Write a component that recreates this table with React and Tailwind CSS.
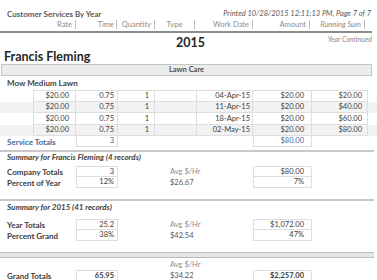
import React from 'react';

const cols = 'grid grid-cols-[33px_43px_42px_37px_42px_56px_59px_56px]';
const cellBorder = 'border-r border-b border-[#dedede]';

const rows = [
    { date: '04-Apr-15', sum: '$20.00' },
    { date: '11-Apr-15', sum: '$40.00' },
    { date: '18-Apr-15', sum: '$60.00' },
    { date: '02-May-15', sum: '$80.00' },
];

function HeaderRow() {
    const sep = 'border-r border-[#bfbfbf] h-[9px] flex items-center leading-none';
    return (
        <div className="grid grid-cols-[33px_43px_41px_38px_40px_58px_57px_55px] h-[9px] text-[7.5px] text-[#8c8c8c]">
            <div />
            <div className={`${sep} justify-end pr-[3px]`}>Rate</div>
            <div className={`${sep} justify-end pr-[2px]`}>Time</div>
            <div className={`${sep} justify-end pr-[3px]`}>Quantity</div>
            <div className={`${sep} justify-center`}>Type</div>
            <div className={`${sep} justify-end pr-[3px]`}>Work Date</div>
            <div className={`${sep} justify-end pr-[3px]`}>Amount</div>
            <div className={`${sep} justify-end pr-[3px] italic`}>Running Sum</div>
        </div>
    );
}

function SummaryRows({ rows }) {
    return rows.map((r, i) => (
        <div key={r.label} className={`${cols} h-[11px] text-[7.5px] leading-none`}>
            <div className="col-span-2 flex items-center pl-[7px] text-[8px] font-bold text-[#404040]">{r.label}</div>
            <div
                className={`flex items-center justify-end pr-[3px] border-x border-b border-[#dedede] text-[#404040] ${i === 0 ? 'border-t' : ''}`}
            >
                {r.time}
            </div>
            <div />
            <div className={`col-span-2 flex items-center pl-[15px] ${r.avgLabel ? 'text-[#8c8c8c]' : 'text-[#595959]'}`}>
                {r.avg}
            </div>
            <div
                className={`flex items-center justify-end pr-[7px] border-x border-b border-[#dedede] text-[#404040] ${i === 0 ? 'border-t' : ''}`}
            >
                {r.amount}
            </div>
            <div />
        </div>
    ));
}

export default function App() {
    return (
        <div
            className="w-[377px] h-[280px] overflow-hidden bg-white text-[#404040]"
            style={{ fontFamily: 'Lato, "Open Sans", sans-serif' }}
        >
            {/* page header */}
            <div className="pt-[9px] h-[19px] flex items-center justify-between">
                <div className="pl-[7px] text-[8px] font-bold text-[#595959] leading-none">Customer Services By Year</div>
                <div className="pr-[6px] text-[7.5px] italic text-[#595959] leading-none">
                    Printed 10/28/2015 12:11:13 PM, Page 7 of 7
                </div>
            </div>
            <div className="mt-[1px]">
                <HeaderRow />
            </div>
            <div className="mt-[2px] w-[372px] h-[2px] bg-[#8c8c8c]" />

            {/* year header */}
            <div className="grid grid-cols-[1fr_auto_1fr] h-[17px]">
                <div />
                <div className="pt-[4px] pl-[4px] text-[12.5px] font-bold leading-[12px] text-[#262626]">2015</div>
                <div className="flex justify-end pr-[5px] pt-[3px]">
                    <span className="text-[7px] italic text-[#8c8c8c] leading-none">Year Continued</span>
                </div>
            </div>
            <div className="h-[13px] pl-[4px] text-[12.5px] font-bold leading-[13px] text-[#262626]">Francis Fleming</div>

            {/* category bar */}
            <div className="mt-[1px] ml-[1px] w-[371px] h-[12px] flex items-center justify-center bg-[#ececec] border border-[#c4c4c4] text-[7.5px] font-bold text-[#4d4d4d] leading-none">
                Lawn Care
            </div>
            <div className="h-[14px] flex items-center pl-[7px] text-[8px] font-bold text-[#404040] leading-none">
                Mow Medium Lawn
            </div>

            {/* detail rows */}
            <div className="text-[7.5px] leading-none text-[#404040]">
                {rows.map((r, i) => (
                    <div key={r.date} className={`${cols} h-[11.5px] ${i % 2 === 1 ? 'bg-[#f2f2f2]' : ''}`}>
                        <div />
                        <div className={`${cellBorder} border-l flex items-center justify-end pr-[6px] ${i === 0 ? 'border-t' : ''}`}>$20.00</div>
                        <div className={`${cellBorder} flex items-center justify-end pr-[3px] ${i === 0 ? 'border-t' : ''}`}>0.75</div>
                        <div className={`${cellBorder} flex items-center justify-end pr-[5px] ${i === 0 ? 'border-t' : ''}`}>1</div>
                        <div className={`${cellBorder} ${i === 0 ? 'border-t' : ''}`} />
                        <div className={`${cellBorder} flex items-center justify-end pr-[2px] ${i === 0 ? 'border-t' : ''}`}>{r.date}</div>
                        <div className={`${cellBorder} flex items-center justify-end pr-[7px] ${i === 0 ? 'border-t' : ''}`}>$20.00</div>
                        <div className={`${cellBorder} flex items-center justify-end pr-[5px] ${i === 0 ? 'border-t' : ''}`}>{r.sum}</div>
                    </div>
                ))}
                <div className={`${cols} h-[11px] text-[#44689c]`}>
                    <div className="col-span-2 flex items-center pl-[7px] text-[8px] font-bold">Service Totals</div>
                    <div className="border-x border-b border-[#dedede] flex items-center justify-end pr-[3px]">3</div>
                    <div />
                    <div />
                    <div />
                    <div className="border-x border-b border-[#dedede] flex items-center justify-end pr-[7px]">$80.00</div>
                    <div />
                </div>
            </div>

            <div className="mt-[3px] w-[374px] h-[2px] bg-[#c8c8c8]" />

            {/* summary for customer */}
            <div className="h-[10px] flex items-center pl-[7px] text-[8px] font-bold italic text-[#404040] leading-none">
                Summary for Francis Fleming (4 records)
            </div>
            <div className="mt-[4px]">
                <SummaryRows
                    rows={[
                        { label: 'Company Totals', time: '3', avg: 'Avg $/Hr', avgLabel: true, amount: '$80.00' },
                        { label: 'Percent of Year', time: '12%', avg: '$26.67', amount: '7%' },
                    ]}
                />
            </div>

            <div className="mt-[11px] w-[374px] h-[2px] bg-[#c8c8c8]" />

            {/* summary for year */}
            <div className="h-[12px] flex items-center pl-[7px] text-[8px] font-bold italic text-[#404040] leading-none">
                Summary for 2015 (41 records)
            </div>
            <div className="mt-[6px]">
                <SummaryRows
                    rows={[
                        { label: 'Year Totals', time: '25.2', avg: 'Avg $/Hr', avgLabel: true, amount: '$1,072.00' },
                        { label: 'Percent Grand', time: '38%', avg: '$42.54', amount: '47%' },
                    ]}
                />
            </div>

            <div className="mt-[11px] w-[374px] h-[6px] border-y border-[#bdbdbd] bg-[#e4e4e4]" />

            {/* grand totals */}
            <div className={`${cols} mt-[2px] h-[10px] text-[7.5px] leading-none`}>
                <div className="col-span-4" />
                <div className="col-span-2 flex items-center pl-[15px] text-[#8c8c8c]">Avg $/Hr</div>
            </div>
            <div className={`${cols} h-[11px] text-[7.5px] leading-none`}>
                <div className="col-span-2 flex items-center pl-[7px] text-[8px] font-bold text-[#404040]">Grand Totals</div>
                <div className="border border-[#dedede] flex items-center justify-end pr-[3px] font-bold">65.95</div>
                <div />
                <div className="col-span-2 flex items-center pl-[15px] text-[#595959]">$34.22</div>
                <div className="border border-[#dedede] flex items-center justify-end pr-[7px] font-bold">$2,257.00</div>
                <div />
            </div>
        </div>
    );
}
